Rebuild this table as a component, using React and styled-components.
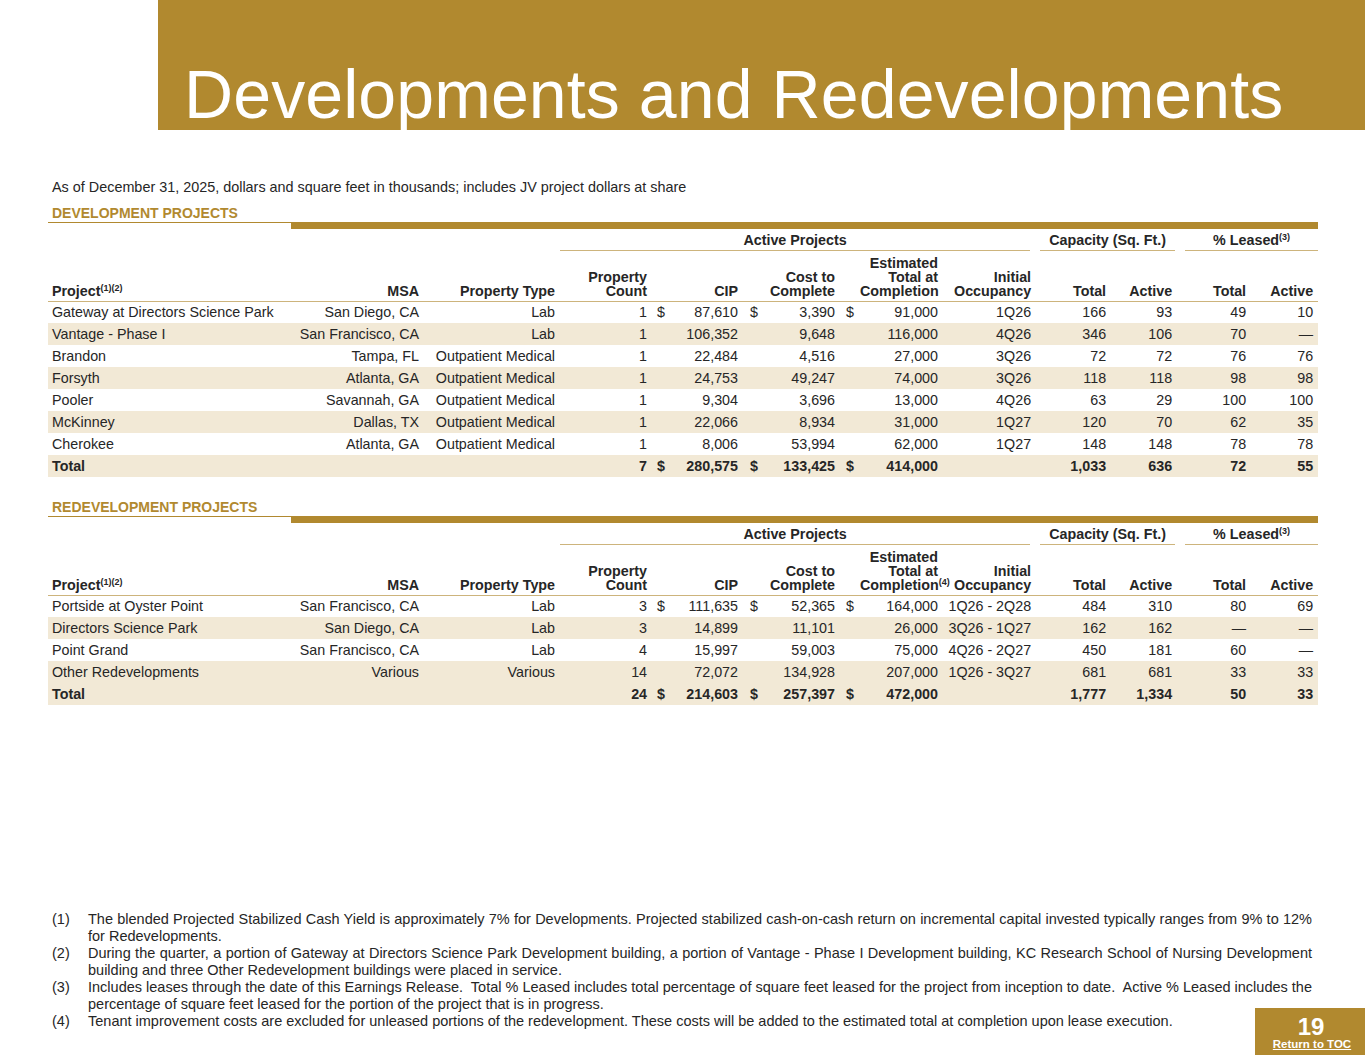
import React from "react";
import styled, { createGlobalStyle } from "styled-components";

const GOLD = "#b1892f";
const STRIPE = "#f2e9d6";
const RULE = "#cdb47c";

const GlobalStyle = createGlobalStyle`
  html, body {
    margin: 0;
    padding: 0;
    background: #fff;
  }
  body {
    font-family: "Liberation Sans", Arial, sans-serif;
    color: #262626;
  }
`;

const Page = styled.div`
  position: relative;
  width: 1365px;
  height: 1055px;
  display: flex;
  flex-direction: column;
  overflow: hidden;
`;

const Banner = styled.header`
  margin-left: 158px;
  height: 130px;
  background: ${GOLD};
  display: flex;
  align-items: flex-end;
  padding: 0 0 2px 26px;
  box-sizing: border-box;
`;

const Title = styled.h1`
  margin: 0;
  font-size: 68px;
  line-height: 68px;
  font-weight: 400;
  color: #fff;
  letter-spacing: 0.1px;
`;

const Content = styled.main`
  padding: 49px 47px 0 48px;
`;

const Subtitle = styled.p`
  margin: 0 0 10px 4px;
  font-size: 14.4px;
  line-height: 16px;
`;

const Section = styled.section`
  margin-top: ${(p) => p.$gap || 0}px;
`;

const SectionTitle = styled.h2`
  margin: 0 0 1px 4px;
  font-size: 14px;
  line-height: 16px;
  font-weight: 700;
  color: ${GOLD};
`;

const Bar = styled.div`
  display: flex;
  align-items: flex-start;
`;

const BarThin = styled.div`
  width: 243px;
  border-top: 1px solid ${GOLD};
`;

const BarThick = styled.div`
  flex: 1;
  height: 7px;
  background: ${GOLD};
`;

const Table = styled.table`
  width: 1270px;
  table-layout: fixed;
  border-collapse: collapse;
  font-size: 14.3px;
`;

const GroupCell = styled.th`
  padding: 3px 0 0 0;
  font-weight: 700;
  text-align: center;
`;

const GroupLabel = styled.div`
  height: 18px;
  line-height: 16px;
  border-bottom: 1px solid ${RULE};
  margin: 0 ${(p) => p.$right || 0}px 0 ${(p) => p.$left || 0}px;
`;

const HeadRow = styled.tr`
  height: 50px;
  border-bottom: 1px solid ${RULE};
`;

const HeadCell = styled.th`
  vertical-align: bottom;
  padding: 0 ${(p) => (p.$last ? 5 : 4)}px 3px 4px;
  font-weight: 700;
  line-height: 14px;
  text-align: ${(p) => (p.$left ? "left" : "right")};
  white-space: nowrap;
`;

const Sup = styled.sup`
  font-size: 9px;
  line-height: 0;
  vertical-align: 5px;
`;

const Row = styled.tr`
  height: 22px;
  background: ${(p) => (p.$shade ? STRIPE : "transparent")};
  font-weight: ${(p) => (p.$total ? 700 : 400)};
`;

const Cell = styled.td`
  padding: 0 ${(p) => (p.$last ? 5 : 4)}px 0 4px;
  text-align: ${(p) => (p.$left ? "left" : "right")};
  white-space: nowrap;
  line-height: 16px;
`;

const DollarCell = styled.td`
  padding: 0 0 0 ${(p) => p.$pad}px;
  text-align: left;
  line-height: 16px;
`;

const Notes = styled.ol`
  list-style: none;
  margin: auto 0 0 0;
  padding: 0 53px 25px 52px;
  font-size: 14.5px;
  line-height: 17px;
`;

const Note = styled.li`
  display: grid;
  grid-template-columns: 36px 1fr;
`;

const NoteText = styled.span`
  text-align: justify;
`;

const PageBox = styled.div`
  position: absolute;
  right: 0;
  bottom: 0;
  width: 110px;
  height: 47px;
  background: ${GOLD};
  color: #fff;
  display: flex;
  flex-direction: column;
  align-items: center;
  padding-top: 8px;
  box-sizing: border-box;
`;

const PageNum = styled.span`
  font-size: 24px;
  line-height: 22px;
  font-weight: 700;
  margin-left: 2px;
`;

const TocLink = styled.a`
  font-size: 11.5px;
  line-height: 12px;
  font-weight: 700;
  color: #fff;
  text-decoration: underline;
  margin-left: 4px;
`;

const widths = [232, 143, 136, 92, 17, 74, 18, 79, 17, 86, 93, 75, 66, 74, 68];

const devRows = [
  ["Gateway at Directors Science Park", "San Diego, CA", "Lab", "1", true, "87,610", "3,390", "91,000", "1Q26", "166", "93", "49", "10"],
  ["Vantage - Phase I", "San Francisco, CA", "Lab", "1", false, "106,352", "9,648", "116,000", "4Q26", "346", "106", "70", "—"],
  ["Brandon", "Tampa, FL", "Outpatient Medical", "1", false, "22,484", "4,516", "27,000", "3Q26", "72", "72", "76", "76"],
  ["Forsyth", "Atlanta, GA", "Outpatient Medical", "1", false, "24,753", "49,247", "74,000", "3Q26", "118", "118", "98", "98"],
  ["Pooler", "Savannah, GA", "Outpatient Medical", "1", false, "9,304", "3,696", "13,000", "4Q26", "63", "29", "100", "100"],
  ["McKinney", "Dallas, TX", "Outpatient Medical", "1", false, "22,066", "8,934", "31,000", "1Q27", "120", "70", "62", "35"],
  ["Cherokee", "Atlanta, GA", "Outpatient Medical", "1", false, "8,006", "53,994", "62,000", "1Q27", "148", "148", "78", "78"],
];
const devTotal = ["Total", "", "", "7", true, "280,575", "133,425", "414,000", "", "1,033", "636", "72", "55"];

const redevRows = [
  ["Portside at Oyster Point", "San Francisco, CA", "Lab", "3", true, "111,635", "52,365", "164,000", "1Q26 - 2Q28", "484", "310", "80", "69"],
  ["Directors Science Park", "San Diego, CA", "Lab", "3", false, "14,899", "11,101", "26,000", "3Q26 - 1Q27", "162", "162", "—", "—"],
  ["Point Grand", "San Francisco, CA", "Lab", "4", false, "15,997", "59,003", "75,000", "4Q26 - 2Q27", "450", "181", "60", "—"],
  ["Other Redevelopments", "Various", "Various", "14", false, "72,072", "134,928", "207,000", "1Q26 - 3Q27", "681", "681", "33", "33"],
];
const redevTotal = ["Total", "", "", "24", true, "214,603", "257,397", "472,000", "", "1,777", "1,334", "50", "33"];

const DataRow = ({ row, shade, total }) => {
  const [name, msa, type, count, dollar, cip, cost, est, occ, capT, capA, lT, lA] = row;
  const sign = dollar ? "$" : "";
  return (
    <Row $shade={shade} $total={total}>
      <Cell $left>{name}</Cell>
      <Cell>{msa}</Cell>
      <Cell>{type}</Cell>
      <Cell>{count}</Cell>
      <DollarCell $pad={6}>{sign}</DollarCell>
      <Cell>{cip}</Cell>
      <DollarCell $pad={8}>{sign}</DollarCell>
      <Cell>{cost}</Cell>
      <DollarCell $pad={7}>{sign}</DollarCell>
      <Cell>{est}</Cell>
      <Cell>{occ}</Cell>
      <Cell>{capT}</Cell>
      <Cell>{capA}</Cell>
      <Cell>{lT}</Cell>
      <Cell $last>{lA}</Cell>
    </Row>
  );
};

const ProjectTable = ({ title, rows, total, completionNote, gap }) => (
  <Section $gap={gap}>
    <SectionTitle>{title}</SectionTitle>
    <Bar>
      <BarThin />
      <BarThick />
    </Bar>
    <Table>
      <colgroup>
        {widths.map((w, i) => (
          <col key={i} style={{ width: w }} />
        ))}
      </colgroup>
      <thead>
        <tr>
          <th colSpan={3} />
          <GroupCell colSpan={8}>
            <GroupLabel $left={1} $right={5}>Active Projects</GroupLabel>
          </GroupCell>
          <GroupCell colSpan={2}>
            <GroupLabel $left={5} $right={1}>Capacity (Sq. Ft.)</GroupLabel>
          </GroupCell>
          <GroupCell colSpan={2}>
            <GroupLabel $left={9}>
              % Leased<Sup>(3)</Sup>
            </GroupLabel>
          </GroupCell>
        </tr>
        <HeadRow>
          <HeadCell $left>
            Project<Sup>(1)(2)</Sup>
          </HeadCell>
          <HeadCell>MSA</HeadCell>
          <HeadCell>Property Type</HeadCell>
          <HeadCell>
            Property
            <br />
            Count
          </HeadCell>
          <HeadCell />
          <HeadCell>CIP</HeadCell>
          <HeadCell />
          <HeadCell>
            Cost to
            <br />
            Complete
          </HeadCell>
          <HeadCell />
          <HeadCell>
            Estimated
            <br />
            Total at
            <br />
            Completion{completionNote && <Sup>(4)</Sup>}
          </HeadCell>
          <HeadCell>
            Initial
            <br />
            Occupancy
          </HeadCell>
          <HeadCell>Total</HeadCell>
          <HeadCell>Active</HeadCell>
          <HeadCell>Total</HeadCell>
          <HeadCell $last>Active</HeadCell>
        </HeadRow>
      </thead>
      <tbody>
        {rows.map((r, i) => (
          <DataRow key={r[0]} row={r} shade={i % 2 === 1} />
        ))}
        <DataRow row={total} shade total />
      </tbody>
    </Table>
  </Section>
);

const notes = [
  "The blended Projected Stabilized Cash Yield is approximately 7% for Developments. Projected stabilized cash-on-cash return on incremental capital invested typically ranges from 9% to 12% for Redevelopments.",
  "During the quarter, a portion of Gateway at Directors Science Park Development building, a portion of Vantage - Phase I Development building, KC Research School of Nursing Development building and three Other Redevelopment buildings were placed in service.",
  "Includes leases through the date of this Earnings Release.\u00a0 Total % Leased includes total percentage of square feet leased for the project from inception to date.\u00a0 Active % Leased includes the percentage of square feet leased for the portion of the project that is in progress.",
  "Tenant improvement costs are excluded for unleased portions of the redevelopment. These costs will be added to the estimated total at completion upon lease execution.",
];

export default function App() {
  return (
    <>
      <GlobalStyle />
      <Page>
        <Banner>
          <Title>Developments and Redevelopments</Title>
        </Banner>
        <Content>
          <Subtitle>
            As of December 31, 2025, dollars and square feet in thousands; includes JV project dollars at share
          </Subtitle>
          <ProjectTable title="DEVELOPMENT PROJECTS" rows={devRows} total={devTotal} />
          <ProjectTable
            title="REDEVELOPMENT PROJECTS"
            rows={redevRows}
            total={redevTotal}
            completionNote
            gap={22}
          />
        </Content>
        <Notes>
          {notes.map((n, i) => (
            <Note key={i}>
              <span>({i + 1})</span>
              <NoteText>{n}</NoteText>
            </Note>
          ))}
        </Notes>
        <PageBox>
          <PageNum>19</PageNum>
          <TocLink href="#">Return to TOC</TocLink>
        </PageBox>
      </Page>
    </>
  );
}
